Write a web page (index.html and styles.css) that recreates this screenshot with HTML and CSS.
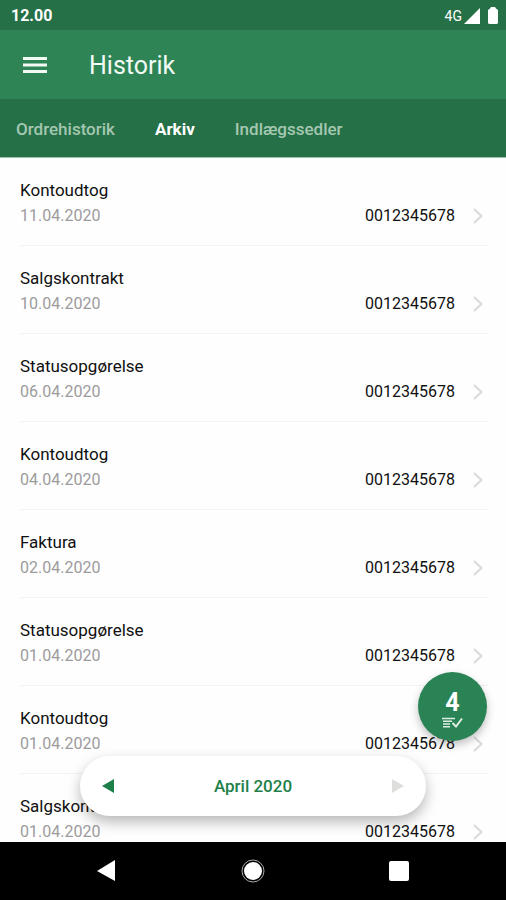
FILE: index.html
```html
<!DOCTYPE html>
<html lang="da">
<head>
<meta charset="utf-8">
<meta name="viewport" content="width=device-width, initial-scale=1">
<title>Historik</title>
<link rel="stylesheet" href="styles.css">
</head>
<body>
<div class="status">
  <span class="clock">12.00</span>
  <span class="network">4G</span>
  <svg class="signal" viewBox="0 0 16 16" width="16" height="16" aria-hidden="true"><path d="M16 0v16H0z"/></svg>
  <svg class="battery" viewBox="0 0 10 17" width="10" height="17" aria-hidden="true"><path d="M3 0h4l1 1.500 2 1.500v13l-1 1H1l-1-1V3l2-1.500z"/></svg>
</div>
<header class="appbar">
  <button class="menu" type="button" aria-label="Menu">
    <svg viewBox="0 0 24 18" width="24" height="18" aria-hidden="true"><path d="M0 0h24v3H0zM0 6.500h24v3H0zM0 13h24v3H0z"/></svg>
  </button>
  <h1 class="heading">Historik</h1>
</header>
<nav class="tabs">
  <a class="tab" href="#">Ordrehistorik</a>
  <a class="tab tab-active" href="#" aria-current="page">Arkiv</a>
  <a class="tab" href="#">Indlægssedler</a>
</nav>
<main class="content">
  <ul class="list">
    <li class="row"><span class="name">Kontoudtog</span><span class="date">11.04.2020</span><span class="number">0012345678</span><svg class="chevron" viewBox="0 0 10 16" width="10" height="16" aria-hidden="true"><path d="M1 1l7.500 7L1 15"/></svg></li>
    <li class="row"><span class="name">Salgskontrakt</span><span class="date">10.04.2020</span><span class="number">0012345678</span><svg class="chevron" viewBox="0 0 10 16" width="10" height="16" aria-hidden="true"><path d="M1 1l7.500 7L1 15"/></svg></li>
    <li class="row"><span class="name">Statusopgørelse</span><span class="date">06.04.2020</span><span class="number">0012345678</span><svg class="chevron" viewBox="0 0 10 16" width="10" height="16" aria-hidden="true"><path d="M1 1l7.500 7L1 15"/></svg></li>
    <li class="row"><span class="name">Kontoudtog</span><span class="date">04.04.2020</span><span class="number">0012345678</span><svg class="chevron" viewBox="0 0 10 16" width="10" height="16" aria-hidden="true"><path d="M1 1l7.500 7L1 15"/></svg></li>
    <li class="row"><span class="name">Faktura</span><span class="date">02.04.2020</span><span class="number">0012345678</span><svg class="chevron" viewBox="0 0 10 16" width="10" height="16" aria-hidden="true"><path d="M1 1l7.500 7L1 15"/></svg></li>
    <li class="row"><span class="name">Statusopgørelse</span><span class="date">01.04.2020</span><span class="number">0012345678</span><svg class="chevron" viewBox="0 0 10 16" width="10" height="16" aria-hidden="true"><path d="M1 1l7.500 7L1 15"/></svg></li>
    <li class="row"><span class="name">Kontoudtog</span><span class="date">01.04.2020</span><span class="number">0012345678</span><svg class="chevron" viewBox="0 0 10 16" width="10" height="16" aria-hidden="true"><path d="M1 1l7.500 7L1 15"/></svg></li>
    <li class="row"><span class="name">Salgskontrakt</span><span class="date">01.04.2020</span><span class="number">0012345678</span><svg class="chevron" viewBox="0 0 10 16" width="10" height="16" aria-hidden="true"><path d="M1 1l7.500 7L1 15"/></svg></li>
  </ul>
  <div class="month">
    <button class="step" type="button" aria-label="Forrige måned"><svg viewBox="0 0 12 14" width="12" height="14" aria-hidden="true"><path d="M12 0v14L0 7z"/></svg></button>
    <span class="month-name">April 2020</span>
    <button class="step" type="button" aria-label="Næste måned" disabled><svg viewBox="0 0 12 14" width="12" height="14" aria-hidden="true"><path d="M0 0v14l12-7z"/></svg></button>
  </div>
  <button class="fab" type="button">
    <span class="count">4</span>
    <svg class="checklist" viewBox="0 0 21 11" width="21" height="11" aria-hidden="true"><path class="lines" d="M0 1.500h13M1 4.200h9M1 7h7M1 9.800h7"/><path d="M10.500 6l3.500 3.500L20 1.500"/></svg>
  </button>
</main>
<footer class="system">
  <button class="key" type="button" aria-label="Tilbage"><svg viewBox="0 0 24 24" width="24" height="24" aria-hidden="true"><path d="M20 1v21L2 12z"/></svg></button>
  <button class="key" type="button" aria-label="Hjem"><svg viewBox="0 0 24 24" width="24" height="24" aria-hidden="true"><circle cx="12" cy="12" r="9"/><circle class="ring" cx="12" cy="12" r="11"/></svg></button>
  <button class="key" type="button" aria-label="Oversigt"><svg viewBox="0 0 24 24" width="24" height="24" aria-hidden="true"><rect x="2" y="2" width="20" height="20" rx="2"/></svg></button>
</footer>
</body>
</html>
```
FILE: styles.css
```css
* { box-sizing: border-box; }

body {
  margin: 0;
  height: 100vh;
  display: flex;
  flex-direction: column;
  overflow: hidden;
  background: #fefefe;
  color: #101010;
  font: 16px/24px Roboto, "Liberation Sans", sans-serif;
}

button {
  padding: 0;
  border: 0;
  background: none;
  color: inherit;
  font: inherit;
}

svg { display: block; fill: currentColor; }

.status {
  display: flex;
  align-items: center;
  height: 30px;
  padding: 1px 8px 0 11px;
  background: #257046;
  color: #fff;
}

.clock { margin-right: auto; font-weight: 700; }
.network { margin-right: 2px; font-size: 14px; }
.battery { margin-left: 8px; }

.appbar {
  display: flex;
  align-items: center;
  gap: 42px;
  height: 69px;
  padding: 2px 23px 0;
  background: #2f8456;
  color: #f2faf4;
}

.heading { margin: 0; font-size: 25px; font-weight: 400; line-height: 32px; }

.tabs {
  display: flex;
  align-items: center;
  gap: 40px;
  height: 59px;
  padding: 2px 16px 0;
  border-bottom: 1px solid #9dbfac;
  background: #257046;
}

.tab {
  color: #a4c7b1;
  font-size: 17px;
  font-weight: 500;
  text-decoration: none;
}

.tab-active { color: #fff; font-weight: 700; }

.content {
  position: relative;
  flex: 1;
  min-height: 0;
  overflow: hidden;
}

.list { margin: 0; padding: 0 17px 0 20px; list-style: none; }

.row {
  display: grid;
  grid-template: 24px 28px / 1fr auto 10px;
  column-gap: 18px;
  align-items: center;
  height: 88px;
  padding: 20px 6px 0 0;
  border-bottom: 1px solid #f3f3f3;
}

.name { grid-column: 1 / -1; font-size: 17px; }
.date { color: #9c9c9c; }

.chevron { fill: none; stroke: #d9d9d6; stroke-width: 2; }

.month {
  position: absolute;
  right: 80px;
  bottom: 26px;
  left: 80px;
  display: flex;
  align-items: center;
  justify-content: space-between;
  height: 60px;
  padding: 0 22px;
  border-radius: 30px;
  background: #fff;
  box-shadow: 0 6px 14px rgba(0, 0, 0, 0.28);
  color: #1e7f4a;
}

.month-name { font-size: 17px; font-weight: 500; }
.step:disabled { color: #dededc; }

.fab {
  position: absolute;
  right: 19px;
  bottom: 101px;
  display: flex;
  flex-direction: column;
  align-items: center;
  width: 69px;
  height: 69px;
  padding-top: 17px;
  border-radius: 50%;
  background: #2a8354;
  box-shadow: 0 4px 9px rgba(0, 0, 0, 0.25);
  color: #fff;
}

.count { font-size: 25px; font-weight: 700; line-height: 28px; }
.checklist { fill: none; stroke: #dceee3; stroke-width: 2; }
.lines { stroke-width: 1.5; }

.system {
  display: flex;
  align-items: center;
  justify-content: center;
  gap: 122px;
  height: 58px;
  background: #000;
  color: #fff;
}

.ring { fill: none; stroke: #aaa; stroke-width: 1; }
```
